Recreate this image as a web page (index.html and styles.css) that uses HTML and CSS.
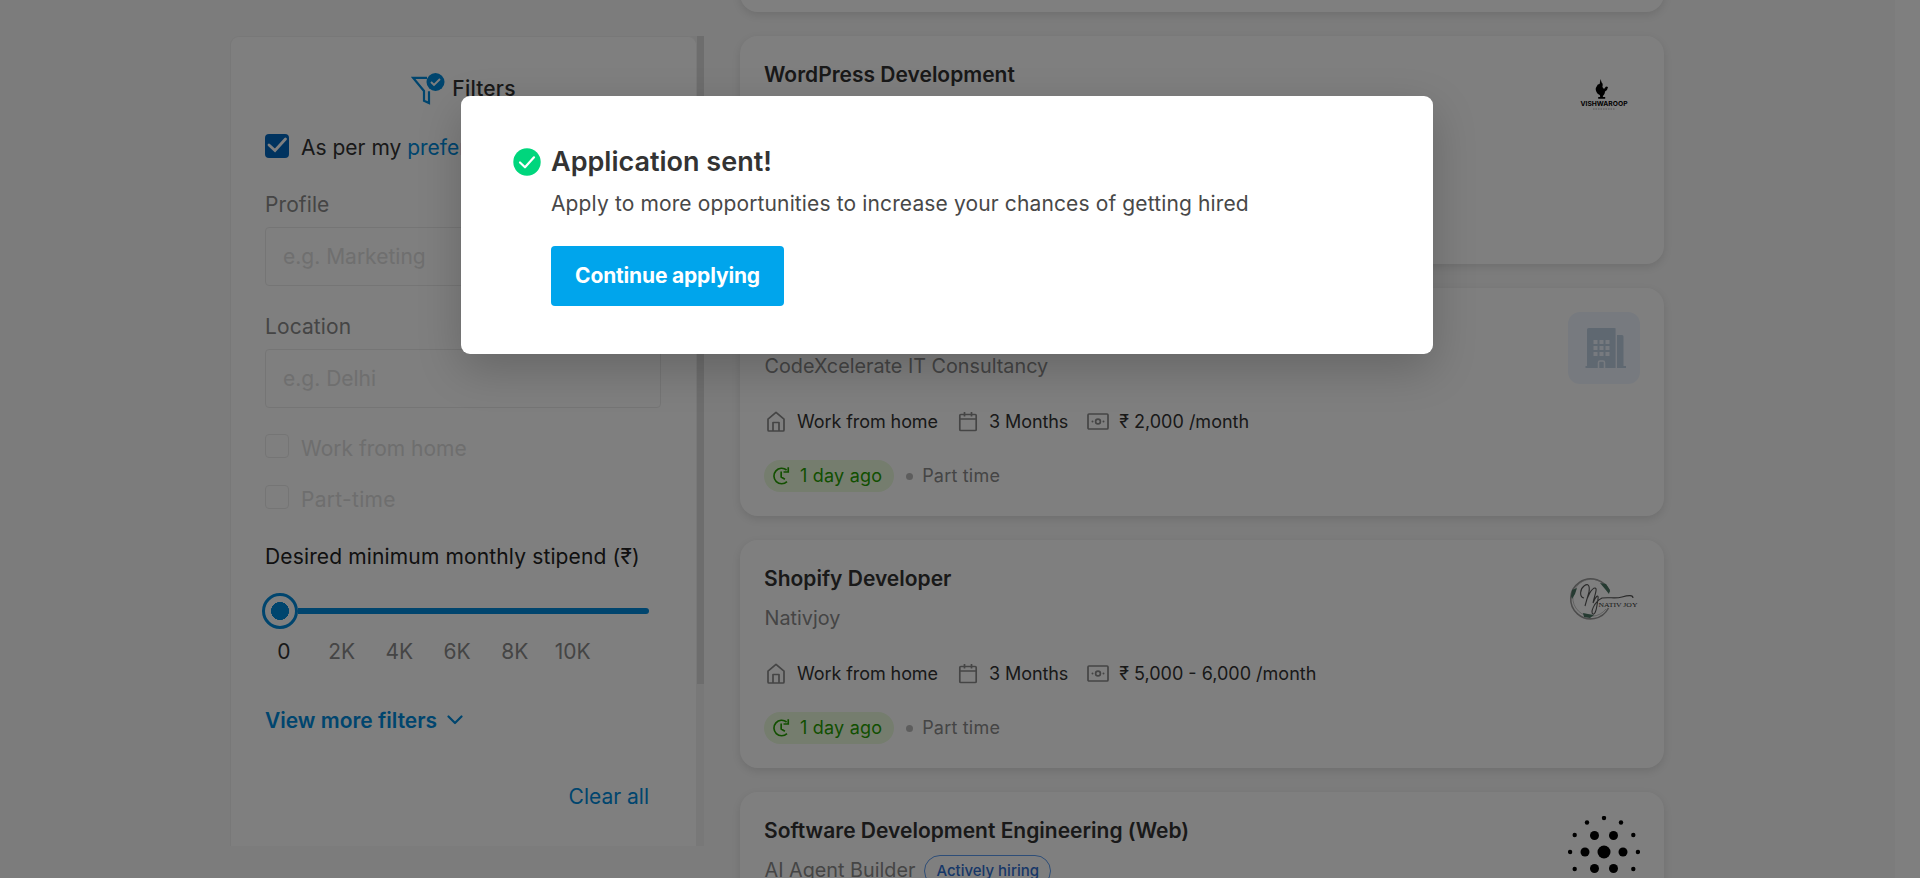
FILE: index.html
```html
<!DOCTYPE html>
<html lang="en">
<head>
<meta charset="utf-8">
<title>Internships</title>
<link rel="stylesheet" href="styles.css">
</head>
<body>
<svg class="sprite" aria-hidden="true">
  <symbol id="home" viewBox="0 0 24 24"><path d="M4 9.200 12 2.300l8 6.900V20a1 1 0 0 1-1 1H5a1 1 0 0 1-1-1zM9 21v-8.500h6V21" fill="none" stroke="currentColor" stroke-width="1.700" stroke-linejoin="round"/></symbol>
  <symbol id="calendar" viewBox="0 0 24 24"><path d="M4.800 4.500h14.400a1 1 0 0 1 1 1v14a1 1 0 0 1-1 1H4.800a1 1 0 0 1-1-1v-14a1 1 0 0 1 1-1zM4 9h16M8.500 2v4.500M15.500 2v4.500" fill="none" stroke="currentColor" stroke-width="1.700"/></symbol>
  <symbol id="money" viewBox="0 0 24 24"><rect x="2" y="4" width="20" height="15" rx="1" fill="none" stroke="currentColor" stroke-width="1.700"/><circle cx="12" cy="11.500" r="2.400" fill="none" stroke="currentColor" stroke-width="1.700"/><circle cx="6.500" cy="11.500" r="1" fill="currentColor"/><circle cx="17.500" cy="11.500" r="1" fill="currentColor"/></symbol>
  <symbol id="recent" viewBox="0 0 24 24"><path d="M18 18.800A9.300 9.300 0 1 1 17.500 4.800M19.500 1.500v5.700h-5.700M11 6.500v6.800l4.500 2.600" fill="none" stroke="currentColor" stroke-width="2"/></symbol>
</svg>

<div class="page">
  <div class="sidebar">
    <aside class="filters">
      <div class="filters-title">
        <svg class="funnel" viewBox="0 0 34 32"><path d="M16 4.800H2L13 18v9.700l5 2.300V18.300" fill="none" stroke="#008bdc" stroke-width="2.200"/><circle cx="24.500" cy="9" r="9" fill="#008bdc"/><path d="M20 9l3 3 6-6" fill="none" stroke="#fff" stroke-width="1.900"/></svg>
        <span>Filters</span>
      </div>
      <label class="check pref"><span class="box on"><svg viewBox="0 0 24 24"><path d="M4 11l6 5.500L20.500 5" fill="none" stroke="#fff" stroke-width="2.800" stroke-linecap="round"/></svg></span><span>As per my <a>preferences</a></span></label>
      <div class="label profile">Profile</div>
      <div class="field">e.g. Marketing</div>
      <div class="label location">Location</div>
      <div class="field">e.g. Delhi</div>
      <label class="check wfh"><span class="box"></span><span>Work from home</span></label>
      <label class="check part"><span class="box"></span><span>Part-time</span></label>
      <div class="stipend">Desired minimum monthly stipend (₹)</div>
      <div class="slider"><span class="knob"></span><span class="track"></span></div>
      <div class="ticks"><span class="now">0</span><span>2K</span><span>4K</span><span>6K</span><span>8K</span><span>10K</span></div>
      <div class="more">View more filters <svg viewBox="0 0 16 10"><path d="M1.500 1.500 8 8l6.500-6.500" fill="none" stroke="currentColor" stroke-width="2.200" stroke-linecap="round" stroke-linejoin="round"/></svg></div>
      <div class="clear">Clear all</div>
    </aside>
    <div class="scroll"><div class="thumb"></div></div>
  </div>

  <main class="list">
    <article class="card first"></article>
    <article class="card">
      <div class="info"><h3>WordPress Development</h3></div>
      <svg class="logo" viewBox="0 0 72 72">
        <path d="M32.600 19l1 3.500c1.300.5 1.300 2.500.8 4.500l1.600 2 2-2.500 2 .5-1 3-2 1.500c0 2-1.200 3.500-2.200 4.500l.2 1h2.200v1.800h-7v-1.800h2l-.4-2c-2.500-.7-4.500-4-4-7l2-3.500 1.800-.5z" fill="#000"/>
        <text x="12.500" y="46.300" class="vish" textLength="47" lengthAdjust="spacingAndGlyphs">VISHWAROOP</text>
        <path d="M25 49h22" stroke="#000" stroke-width="1.500" stroke-dasharray="1.500 1" opacity=".2"/>
      </svg>
    </article>
    <article class="card">
      <div class="info"><h3>Web Development</h3><p class="company">CodeXcelerate IT Consultancy</p>
        <div class="meta"><span><svg><use href="#home"/></svg>Work from home</span><span><svg><use href="#calendar"/></svg>3 Months</span><span class="pay"><svg><use href="#money"/></svg>₹ 2,000 /month</span></div>
        <div class="status"><span class="pill"><svg><use href="#recent"/></svg>1 day ago</span><i></i><span>Part time</span></div>
      </div>
      <svg class="logo" viewBox="0 0 72 72"><rect width="72" height="72" rx="12" fill="#eef5ff"/><path d="M19 17.500a1.500 1.500 0 0 1 1.500-1.500h26a1.500 1.500 0 0 1 1.500 1.500V54h1V23h5a1.500 1.500 0 0 1 1.500 1.500V54H58v2H17.500v-2H19z" fill="#bfd0e3"/><path d="M48.300 17v39" stroke="#eef5ff" stroke-width="1.400"/><path d="M25.500 28h4v4h-4zm6 0h4v4h-4zm6 0h4v4h-4zm-12 6h4v4h-4zm6 0h4v4h-4zm6 0h4v4h-4zm-12 6h4v4h-4zm6 0h4v4h-4zm6 0h4v4h-4z" fill="#eef5ff"/><path d="M30.500 56v-5.500a1.500 1.500 0 0 1 1.500-1.500h3a1.500 1.500 0 0 1 1.500 1.500V56" fill="none" stroke="#eef5ff" stroke-width="1.500"/></svg>
    </article>
    <article class="card">
      <div class="info"><h3>Shopify Developer</h3><p class="company">Nativjoy</p>
        <div class="meta"><span><svg><use href="#home"/></svg>Work from home</span><span><svg><use href="#calendar"/></svg>3 Months</span><span class="pay"><svg><use href="#money"/></svg>₹ 5,000 - 6,000 /month</span></div>
        <div class="status"><span class="pill"><svg><use href="#recent"/></svg>1 day ago</span><i></i><span>Part time</span></div>
      </div>
      <svg class="logo" viewBox="0 0 72 72">
        <path d="M40.500 44A20 20 0 1 1 41.500 28" fill="none" stroke="#999" stroke-width="1.600"/><path d="M38 45A18.500 18.500 0 1 1 39 24" fill="none" stroke="#aaa" stroke-width=".7"/>
        <path d="M3 32l1-6 5-2-2 6-3 5zM32 19l6 1 4 6-1 4-4-5zM15 49l5 1 6 1-4 3-6-1z" fill="#4d7665"/>
        <path d="M16 34c-5-1-4-9 0-12s6-1 5 6l-4 14c2-10 7-18 10-18s-1 9-2 15c2-6 6-10 5-4s-2 16-5 15 1-12 9-16c8-1 13 1 20-1s11-2 11 1" fill="none" stroke="#555" stroke-width="1.100"/>
        <text x="30.500" y="43" class="nativ" textLength="39" lengthAdjust="spacingAndGlyphs">NATIV JOY</text>
      </svg>
    </article>
    <article class="card">
      <div class="info"><h3>Software Development Engineering (Web)</h3><div class="hiring"><p class="company">AI Agent Builder</p><span class="badge">Actively hiring</span></div></div>
      <svg class="logo" viewBox="0 0 72 72"><circle cx="36" cy="36" r="6.500"/><g><circle cx="26.500" cy="19.500" r="4.500"/><circle cx="45.500" cy="19.500" r="4.500"/><circle cx="17" cy="36" r="4.500"/><circle cx="55" cy="36" r="4.500"/><circle cx="26.500" cy="52.500" r="4.500"/><circle cx="45.500" cy="52.500" r="4.500"/></g><circle cx="36" cy="2" r="2.200"/><circle cx="19" cy="6.500" r="2.200"/><circle cx="53" cy="6.500" r="2.200"/><circle cx="6.700" cy="19" r="2.200"/><circle cx="65.300" cy="19" r="2.200"/><circle cx="2.100" cy="36" r="2.200"/><circle cx="69.900" cy="36" r="2.200"/><circle cx="6.700" cy="53" r="2.200"/><circle cx="65.300" cy="53" r="2.200"/></svg>
    </article>
  </main>
  <div class="gutter"></div>
</div>

<div class="overlay">
  <section class="modal" role="dialog">
    <svg class="ok" viewBox="0 0 28 28"><circle cx="14" cy="14" r="13.700" fill="#00d67d"/><path d="M7 14.500l5 4.800 9-10" fill="none" stroke="#fff" stroke-width="2.200" stroke-linecap="round" stroke-linejoin="round"/></svg>
    <div>
      <h2>Application sent!</h2>
      <p>Apply to more opportunities to increase your chances of getting hired</p>
      <button>Continue applying</button>
    </div>
  </section>
</div>
</body>
</html>
```
FILE: styles.css
```css
* { box-sizing: border-box; }
body { margin: 0; height: 878px; overflow: hidden; background: #f8f8f8; font: 400 21px/30px Inter, sans-serif; color: #484848; }
h2, h3, p { margin: 0; }
.sprite { display: none; }
.page { display: flex; height: 878px; overflow: hidden; padding-left: 230px; }

.sidebar { display: flex; flex: none; width: 474px; height: 810px; margin-top: 36px; background: #f1f1f1; border-radius: 9px 0 0 0; }
.filters { width: 467px; height: 810px; padding: 0 35px 0 34px; background: #fff; border: 1px solid #f1f1f1; border-bottom: 0; border-radius: 9px 9px 0 0; }
.scroll { width: 7px; }
.thumb { height: 648px; background: #dadada; }
.filters-title { display: flex; justify-content: center; height: 60px; padding: 36px 0 0 1px; gap: 7px; color: #333; font-weight: 500; letter-spacing: .2px; }
.filters-title span { padding-top: 1px; }
.funnel { width: 34px; height: 32px; }
.check { display: flex; gap: 12px; height: 30px; align-items: center; }
.check a { color: #008bdc; }
.box { width: 24px; height: 24px; border: 1.5px solid #eaeaea; border-radius: 4px; }
.box.on { border: 0; background: #0066bf; }
.box svg { display: block; width: 24px; height: 24px; }
.pref { margin-top: 36px; color: #333; }
.pref .box { margin-bottom: 4px; }
.label { color: #8a8a8a; letter-spacing: .1px; }
.profile { margin-top: 27px; }
.field { height: 59px; margin-top: 7px; padding: 14px 17px; border: 1px solid #ebebeb; border-radius: 4px; color: #dedede; }
.location { margin-top: 26px; }
.wfh, .part { color: #dcdcdc; }
.wfh .box, .part .box { margin-bottom: 6px; }
.wfh { margin-top: 26px; }
.part { margin-top: 21px; letter-spacing: .3px; }
.stipend { margin-top: 27px; color: #222; letter-spacing: .14px; white-space: nowrap; }
.slider { display: flex; align-items: center; height: 36px; margin: 21px 0 0 -3px; }
.knob { flex: none; width: 36px; height: 36px; border: 3px solid #008bdc; border-radius: 50%; background: radial-gradient(circle, #008bdc 8.800px, #fff 9.200px); }
.track { width: 351px; height: 6px; background: #008bdc; border-radius: 0 3px 3px 0; }
.ticks { display: grid; grid-template-columns: repeat(6, 57.750px); margin: 8px 0 0 -10px; text-align: center; color: #8a8a8a; }
.ticks .now { color: #333; }
.more { display: flex; align-items: center; gap: 10px; margin-top: 39px; color: #008bdc; font-weight: 600; }
.more svg { width: 16px; height: 10px; margin-bottom: 2px; }
.clear { margin: 46px 12px 0 0; text-align: right; color: #008bdc; }

.list { display: flex; flex-direction: column; gap: 24px; width: 924px; margin: -216px 0 0 36px; }
.card { display: flex; flex: none; justify-content: space-between; height: 228px; padding: 24px; background: #fff; border-radius: 18px; box-shadow: 0 3px 9px rgba(0, 0, 0, .11); }
h3 { font-size: 21px; line-height: 30px; font-weight: 600; color: #333; }
.company { margin-top: 9px; padding-left: .5px; font-size: 19.800px; color: #8a8a8a; }
.meta { display: flex; gap: 18px; margin-top: 26px; font-size: 18px; letter-spacing: -.08px; }
.meta > span, .pill { display: flex; align-items: center; }
.meta > span { gap: 9px; color: #333; }
.meta svg { width: 24px; height: 24px; color: #8a8a8a; }
.meta .pay { letter-spacing: 0; }
.status { display: flex; align-items: center; height: 32px; margin-top: 23px; font-size: 18px; letter-spacing: .2px; color: #8a8a8a; }
.pill { height: 32px; padding: 0 12px 0 8px; gap: 8px; border-radius: 16px; background: #eafbdc; color: #259f00; }
.pill svg { width: 20px; height: 20px; }
.status i { width: 7px; height: 7px; margin: 0 9px 0 12px; border-radius: 50%; background: #bbb; }
.logo { flex: none; width: 72px; height: 72px; }
.vish { font: 700 6.500px Inter, sans-serif; }
.nativ { font: 7px "Liberation Serif", serif; fill: #333; }
.hiring { display: flex; gap: 9px; }
.badge { height: 32px; margin-top: 9px; padding: 0 11px; border: 1.500px solid #5b9bf0; border-radius: 16px; color: #2f6fd0; font: 500 15px/30px Inter, sans-serif; }
.gutter { flex: none; width: 25px; margin-left: auto; background: #fff; }

.overlay { position: absolute; inset: 0; background: rgba(0, 0, 0, .5); }
.modal { display: flex; gap: 10px; width: 972px; height: 258px; margin: 96px 0 0 461px; padding: 48px 52px; background: #fff; border-radius: 9px; box-shadow: 0 15px 45px rgba(0, 0, 0, .2); }
.ok { flex: none; width: 28px; height: 28px; margin-top: 4px; }
h2 { font-size: 27px; line-height: 36px; font-weight: 600; color: #333; }
.modal p { margin-top: 9px; letter-spacing: .13px; }
.modal button { width: 233px; height: 60px; margin-top: 27px; padding: 0 0 2px; border: 0; border-radius: 4px; background: #00a5ec; color: #fff; font: 700 21px Inter, sans-serif; letter-spacing: -.17px; }
```
